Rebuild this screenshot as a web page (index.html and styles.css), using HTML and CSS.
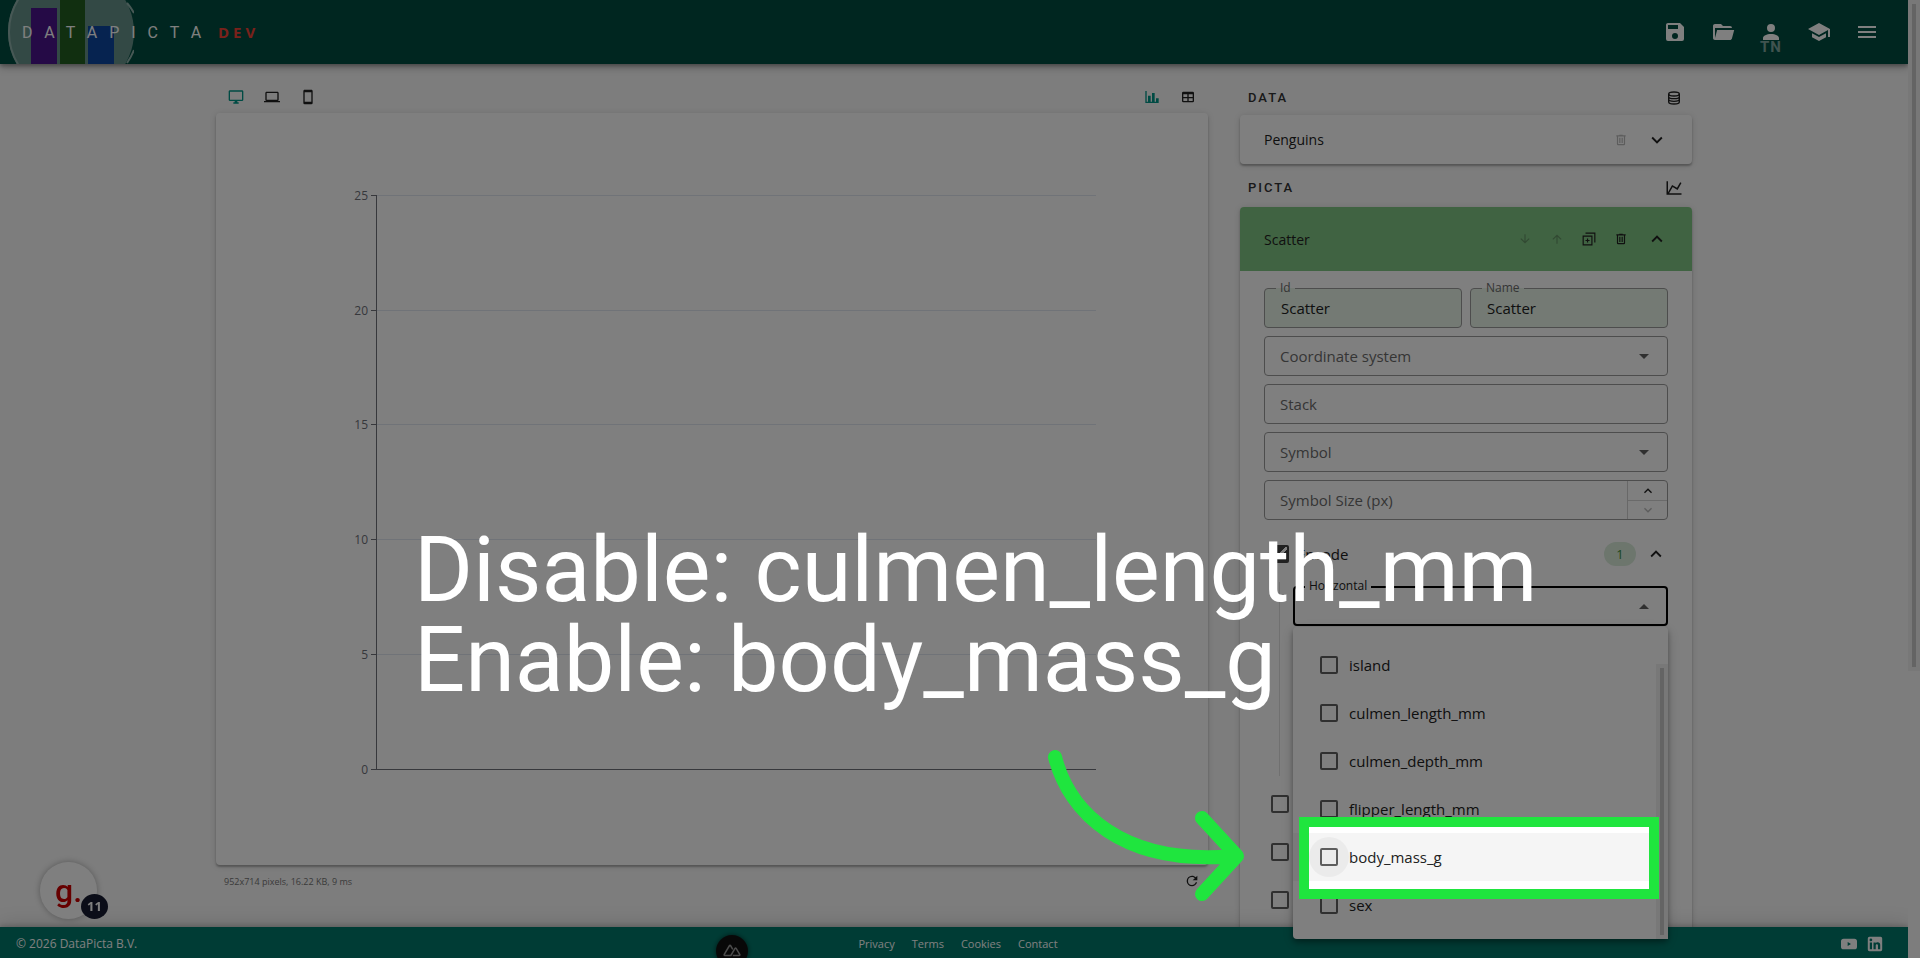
FILE: index.html
```
<!DOCTYPE html>
<html lang="en">
<head>
  <meta charset="UTF-8">
  <meta name="viewport" content="width=device-width, initial-scale=1.0">
  <title>DataPicta</title>
  <link rel="stylesheet" href="styles.css">
</head>
<body>
  <div class="window">
    <div class="app">
      <header class="topbar">
        <div class="brand">
          <svg class="brand-logo" viewBox="0 0 126 64" aria-hidden="true">
            <circle cx="63" cy="32" r="63" fill="#66938b"/>
            <path d="M126 13A63 63 0 0 0 119 3M126 50A63 63 0 0 1 119 63M14 -6A62 62 0 0 0 14 70" fill="none" stroke="#8fb0aa" stroke-width="2"/>
            <rect x="23" y="8" width="26" height="56" fill="#4a148c"/>
            <rect x="52" y="0" width="25" height="64" fill="#235e20"/>
            <rect x="80" y="26" width="26" height="38" fill="#0d47a1"/>
          </svg>
          <span class="brand-name">DATAPICTA</span>
          <span class="brand-env">DEV</span>
        </div>
        <nav class="topbar-actions">
          <button class="nav-btn" aria-label="Save"><svg viewBox="0 0 24 24"><path d="M15,9H5V5H15M12,19A3,3 0 0,1 9,16A3,3 0 0,1 12,13A3,3 0 0,1 15,16A3,3 0 0,1 12,19M17,3H5C3.89,3 3,3.9 3,5V19A2,2 0 0,0 5,21H19A2,2 0 0,0 21,19V7L17,3Z"/></svg></button>
          <button class="nav-btn" aria-label="Open"><svg viewBox="0 0 24 24"><path d="M19,20H4C2.89,20 2,19.1 2,18V6C2,4.89 2.89,4 4,4H10L12,6H19A2,2 0 0,1 21,8H21L4,8V18L6.14,10H23.21L20.93,18.5C20.7,19.37 19.92,20 19,20Z"/></svg></button>
          <button class="nav-btn" aria-label="Account"><svg viewBox="0 0 24 24"><path d="M12,4A4,4 0 0,1 16,8A4,4 0 0,1 12,12A4,4 0 0,1 8,8A4,4 0 0,1 12,4M12,14C16.42,14 20,15.79 20,18V20H4V18C4,15.79 7.58,14 12,14Z"/></svg><span class="initials">TN</span></button>
          <button class="nav-btn" aria-label="Tutorials"><svg viewBox="0 0 24 24"><path d="M12,3L1,9L12,15L21,10.09V17H23V9M5,13.18V17.18L12,21L19,17.18V13.18L12,17L5,13.18Z"/></svg></button>
          <button class="nav-btn" aria-label="Menu"><svg viewBox="0 0 24 24"><path d="M3,6H21V8H3V6M3,11H21V13H3V11M3,16H21V18H3V16Z"/></svg></button>
        </nav>
      </header>

      <main class="workspace">
        <section class="preview">
          <div class="toolbar">
            <div class="tool-group">
              <button class="tool active" aria-label="Desktop"><svg viewBox="0 0 24 24"><path d="M21,16H3V4H21M21,2H3C1.89,2 1,2.89 1,4V16A2,2 0 0,0 3,18H10V20H8V22H16V20H14V18H21A2,2 0 0,0 23,16V4C23,2.89 22.1,2 21,2Z"/></svg></button>
              <button class="tool" aria-label="Laptop"><svg viewBox="0 0 24 24"><path d="M4,6H20V16H4M20,18A2,2 0 0,0 22,16V6C22,4.89 21.1,4 20,4H4C2.89,4 2,4.89 2,6V16A2,2 0 0,0 4,18H0V20H24V18H20Z"/></svg></button>
              <button class="tool" aria-label="Phone"><svg viewBox="0 0 24 24"><path d="M17,19H7V5H17M17,1H7C5.89,1 5,1.89 5,3V21A2,2 0 0,0 7,23H17A2,2 0 0,0 19,21V3C19,1.89 18.1,1 17,1Z"/></svg></button>
            </div>
            <div class="tool-group">
              <button class="tool active" aria-label="Chart"><svg viewBox="0 0 24 24"><path d="M22,21H2V3H4V19H6V10H10V19H12V6H16V19H18V14H22V21Z"/></svg></button>
              <button class="tool" aria-label="Table"><svg viewBox="0 0 24 24"><path d="M5,4H19A2,2 0 0,1 21,6V18A2,2 0 0,1 19,20H5A2,2 0 0,1 3,18V6A2,2 0 0,1 5,4M5,8V12H11V8H5M13,8V12H19V8H13M5,14V18H11V14H5M13,14V18H19V14H13Z"/></svg></button>
            </div>
          </div>
          <div class="card chart-card">
            <svg class="chart" viewBox="0 0 952 714" role="img" aria-label="Empty scatter chart">
              <g stroke="#e0e6f1" shape-rendering="crispEdges">
                <path d="M141 63.5H860M141 178.5H860M141 292.5H860M141 407.5H860M141 522.5H860"/>
              </g>
              <g stroke="#6e7079" fill="none" shape-rendering="crispEdges">
                <path d="M140.5 63V637M135 637.5H860M135 63.5H141M135 178.5H141M135 292.5H141M135 407.5H141M135 522.5H141"/>
              </g>
              <g class="chart-labels">
                <text x="132" y="68">25</text>
                <text x="132" y="183">20</text>
                <text x="132" y="297">15</text>
                <text x="132" y="412">10</text>
                <text x="132" y="527">5</text>
                <text x="132" y="642">0</text>
              </g>
            </svg>
          </div>
          <div class="preview-status">
            <span>952x714 pixels, 16.22 KB, 9 ms</span>
            <button class="tool" aria-label="Refresh"><svg viewBox="0 0 24 24"><path d="M17.65,6.35C16.2,4.9 14.21,4 12,4A8,8 0 0,0 4,12A8,8 0 0,0 12,20C15.73,20 18.84,17.45 19.73,14H17.65C16.83,16.33 14.61,18 12,18A6,6 0 0,1 6,12A6,6 0 0,1 12,6C13.66,6 15.14,6.69 16.22,7.78L13,11H20V4L17.65,6.35Z"/></svg></button>
          </div>
        </section>

        <aside class="settings">
          <div class="section-title">
            <h2>DATA</h2>
            <button class="tool" aria-label="Add data"><svg viewBox="0 0 24 24" class="line"><ellipse cx="12" cy="6" rx="8" ry="3"/><path d="M4 6V18C4 19.7 7.6 21 12 21S20 19.7 20 18V6M4 10C4 11.7 7.6 13 12 13S20 11.7 20 10M4 14C4 15.7 7.6 17 12 17S20 15.7 20 14"/></svg></button>
          </div>
          <div class="card panel-head">
            <span class="panel-name">Penguins</span>
            <button class="small-tool" aria-label="Delete" disabled><svg viewBox="0 0 24 24"><path d="M9,3V4H4V6H5V19A2,2 0 0,0 7,21H17A2,2 0 0,0 19,19V6H20V4H15V3H9M7,6H17V19H7V6M9,8V17H11V8H9M13,8V17H15V8H13Z"/></svg></button>
            <button class="expander" aria-label="Expand"><svg viewBox="0 0 24 24"><path d="M7.41,8.58L12,13.17L16.59,8.58L18,10L12,16L6,10L7.41,8.58Z"/></svg></button>
          </div>

          <div class="section-title">
            <h2>PICTA</h2>
            <button class="tool wide" aria-label="Add picta"><svg viewBox="0 0 24 24"><path d="M16,11.78L20.24,4.45L21.97,5.45L16.74,14.5L10.23,10.75L5.46,19H22V21H2V3H4V17.54L9.5,8L16,11.78Z"/></svg></button>
          </div>
          <div class="card">
            <div class="panel-head open">
              <span class="panel-name">Scatter</span>
              <button class="small-tool" aria-label="Move down" disabled><svg viewBox="0 0 24 24"><path d="M11,4H13V16L18.5,10.5L19.92,11.92L12,19.84L4.08,11.92L5.5,10.5L11,16V4Z"/></svg></button>
              <button class="small-tool" aria-label="Move up" disabled><svg viewBox="0 0 24 24"><path d="M13,20H11V8L5.5,13.5L4.08,12.08L12,4.16L19.92,12.08L18.5,13.5L13,8V20Z"/></svg></button>
              <button class="small-tool" aria-label="Duplicate"><svg viewBox="0 0 24 24" class="line"><path d="M2 7H17V22H2ZM6 2H22V18M9.500 11V18M6 14.500H13"/></svg></button>
              <button class="small-tool" aria-label="Delete"><svg viewBox="0 0 24 24"><path d="M9,3V4H4V6H5V19A2,2 0 0,0 7,21H17A2,2 0 0,0 19,19V6H20V4H15V3H9M7,6H17V19H7V6M9,8V17H11V8H9M13,8V17H15V8H13Z"/></svg></button>
              <button class="expander" aria-label="Collapse"><svg viewBox="0 0 24 24"><path d="M7.41,15.41L12,10.83L16.59,15.41L18,14L12,8L6,14L7.41,15.41Z"/></svg></button>
            </div>
            <form class="options">
              <div class="field-row">
                <div class="field filled">
                  <label for="picta-id">Id</label>
                  <input id="picta-id" type="text" value="Scatter">
                </div>
                <div class="field filled">
                  <label for="picta-name">Name</label>
                  <input id="picta-name" type="text" value="Scatter">
                </div>
              </div>
              <div class="field">
                <label for="coord">Coordinate system</label>
                <select id="coord"></select>
                <svg class="arrow" viewBox="0 0 24 24"><path d="M7,10L12,15L17,10H7Z"/></svg>
              </div>
              <div class="field">
                <label for="stack">Stack</label>
                <input id="stack" type="text">
              </div>
              <div class="field">
                <label for="symbol">Symbol</label>
                <select id="symbol"></select>
                <svg class="arrow" viewBox="0 0 24 24"><path d="M7,10L12,15L17,10H7Z"/></svg>
              </div>
              <div class="field">
                <label for="symbol-size">Symbol Size (px)</label>
                <input id="symbol-size" type="text" inputmode="numeric">
                <div class="stepper">
                  <button type="button" aria-label="Increase"><svg viewBox="0 0 24 24"><path d="M7.41,15.41L12,10.83L16.59,15.41L18,14L12,8L6,14L7.41,15.41Z"/></svg></button>
                  <button type="button" aria-label="Decrease" disabled><svg viewBox="0 0 24 24"><path d="M7.41,8.58L12,13.17L16.59,8.58L18,10L12,16L6,10L7.41,8.58Z"/></svg></button>
                </div>
              </div>

              <div class="tree-row expanded">
                <input type="checkbox" id="encode" checked>
                <label for="encode">Encode</label>
                <span class="chip">1</span>
                <button type="button" class="expander" aria-label="Collapse"><svg viewBox="0 0 24 24"><path d="M7.41,15.41L12,10.83L16.59,15.41L18,14L12,8L6,14L7.41,15.41Z"/></svg></button>
              </div>
              <div class="tree-children">
                <div class="field focused">
                  <label for="horizontal">Horizontal</label>
                  <select id="horizontal"></select>
                  <svg class="arrow" viewBox="0 0 24 24"><path d="M7,15L12,10L17,15H7Z"/></svg>
                  <div class="menu">
                    <label class="menu-item"><input type="checkbox">island</label>
                    <label class="menu-item"><input type="checkbox">culmen_length_mm</label>
                    <label class="menu-item"><input type="checkbox">culmen_depth_mm</label>
                    <label class="menu-item"><input type="checkbox">flipper_length_mm</label>
                    <label class="menu-item hover"><input type="checkbox">body_mass_g</label>
                    <label class="menu-item"><input type="checkbox">sex</label>
                    <div class="menu-scroll"></div>
                  </div>
                </div>
              </div>
              <div class="tree-row"><input type="checkbox" aria-label="Item style"></div>
              <div class="tree-row"><input type="checkbox" aria-label="Label"></div>
              <div class="tree-row"><input type="checkbox" aria-label="Emphasis"></div>
            </form>
          </div>
        </aside>
      </main>

      <footer class="footer">
        <span>© 2026 DataPicta B.V.</span>
        <nav class="footer-links">
          <a href="#">Privacy</a>
          <a href="#">Terms</a>
          <a href="#">Cookies</a>
          <a href="#">Contact</a>
        </nav>
        <div class="social">
          <a href="#" aria-label="YouTube"><svg viewBox="0 0 24 24"><path fill-rule="evenodd" d="M4 4H20A4 4 0 0 1 24 8V16A4 4 0 0 1 20 20H4A4 4 0 0 1 0 16V8A4 4 0 0 1 4 4M10 9V15L15 12Z"/></svg></a>
          <a href="#" aria-label="LinkedIn"><svg viewBox="2 2 20 20"><path d="M19 3A2 2 0 0 1 21 5V19A2 2 0 0 1 19 21H5A2 2 0 0 1 3 19V5A2 2 0 0 1 5 3H19M18.5 18.5V13.2A3.26 3.26 0 0 0 15.24 9.94C14.39 9.94 13.4 10.46 12.92 11.24V10.13H10.13V18.5H12.92V13.57C12.92 12.8 13.54 12.17 14.31 12.17A1.4 1.4 0 0 1 15.71 13.57V18.5H18.5M6.88 8.56A1.68 1.68 0 0 0 8.56 6.88C8.56 5.95 7.81 5.19 6.88 5.19A1.69 1.69 0 0 0 5.19 6.88C5.19 7.81 5.95 8.56 6.88 8.56M8.27 18.5V10.13H5.5V18.5H8.27Z"/></svg></a>
        </div>
      </footer>
    </div>
    <div class="page-scroll"></div>
  </div>

  <!-- floating widgets -->
  <button class="guide-widget" aria-label="Guides">
    <span>g.</span>
    <span class="guide-count">11</span>
  </button>
  <button class="devtools" aria-label="Devtools">
    <svg viewBox="0 0 24 24" class="line"><path d="M13 18H21.500C22.500 18 22.700 17.200 22.300 16.500L17.500 8.500C17 7.800 16.500 7.800 16 8.500L10.500 18H2.500C1.500 18 1.300 17.200 1.700 16.500L8.500 5C9 4.300 9.700 4.300 10.200 5L13 9.800"/></svg>
  </button>

  <!-- guide step -->
  <div class="spotlight"></div>
  <svg class="guide-arrow" viewBox="0 0 204 160" aria-hidden="true">
    <path d="M11 11C25 66 78 120 190 110M158 72L193 110L158 148"/>
  </svg>
  <p class="guide-text">Disable: culmen_length_mm<br>Enable: body_mass_g</p>
</body>
</html>
```
FILE: styles.css
```
* {
  box-sizing: border-box;
}

body {
  margin: 0;
  height: 100vh;
  overflow: hidden;
  background: #fafafa;
  color: #212121;
  font-family: "Open Sans", "Noto Sans", sans-serif;
  font-size: 15px;
}

button {
  padding: 0;
  border: none;
  background: none;
  color: inherit;
  font: inherit;
  cursor: pointer;
}

button:disabled {
  opacity: 0.3;
}

a {
  color: inherit;
  text-decoration: none;
}

svg {
  display: block;
  fill: currentColor;
}

svg.line {
  fill: none;
  stroke: currentColor;
  stroke-width: 2;
}

.window {
  display: flex;
  height: 100vh;
}

.app {
  flex: 1;
  min-width: 0;
  display: flex;
  flex-direction: column;
  overflow: hidden;
}

.page-scroll {
  width: 12px;
  height: 70%;
  padding: 4px;
  background: #f1f1f1;
}

.page-scroll::before {
  content: "";
  display: block;
  height: 100%;
  background: #c8c8c8;
}

/* top bar */
.topbar {
  flex: none;
  display: flex;
  justify-content: space-between;
  height: 64px;
  padding: 0 17px 0 8px;
  background: #004d40;
  color: #fff;
  box-shadow: 0 2px 4px rgba(0, 0, 0, 0.3), 0 4px 8px rgba(0, 0, 0, 0.2);
  z-index: 1;
}

.brand {
  display: grid;
  grid-template-columns: 210px auto;
  align-items: center;
}

.brand-logo {
  grid-area: 1 / 1;
  width: 126px;
  height: 64px;
}

.brand-name {
  grid-area: 1 / 1;
  padding-left: 14px;
  font-family: Roboto, sans-serif;
  font-size: 16px;
  letter-spacing: 12px;
}

.brand-env {
  color: #f44336;
  font-size: 15px;
  font-weight: 700;
  letter-spacing: 4px;
}

.topbar-actions {
  display: flex;
  align-items: center;
}

.nav-btn {
  position: relative;
  display: grid;
  place-items: center;
  width: 48px;
  height: 48px;
}

.nav-btn svg {
  width: 24px;
  height: 24px;
}

.initials {
  position: absolute;
  top: 32px;
  left: 0;
  width: 100%;
  color: #80a69f;
  font: 700 15px/15px Roboto, sans-serif;
  letter-spacing: 1px;
  text-align: center;
}

/* workspace */
.workspace {
  flex: 1;
  min-height: 0;
  display: grid;
  grid-template-columns: minmax(0, 1fr) 452px;
  gap: 32px;
  width: 100%;
  max-width: 1500px;
  margin: 0 auto;
  padding: 17px 12px 0;
}

.card {
  border-radius: 4px;
  background: #fff;
  box-shadow: 0 2px 2px rgba(0, 0, 0, 0.25), 0 1px 6px rgba(0, 0, 0, 0.15);
}

.toolbar,
.tool-group,
.preview-status,
.section-title {
  display: flex;
  align-items: center;
}

.toolbar,
.preview-status,
.section-title {
  justify-content: space-between;
}

.toolbar {
  height: 32px;
  padding: 0 2px;
}

.tool {
  display: grid;
  place-items: center;
  width: 36px;
  height: 32px;
}

.tool svg {
  width: 16px;
  height: 16px;
}

.tool.wide svg {
  width: 18px;
  height: 18px;
}

.tool.active {
  color: #009688;
}

.chart-card {
  padding: 19px 20px;
}

.chart {
  width: 100%;
  height: auto;
}

.chart-labels {
  fill: #6e7079;
  font-size: 12px;
  text-anchor: end;
}

.preview-status {
  padding-left: 8px;
  color: #757575;
  font-size: 9px;
}

.preview-status .tool {
  width: 32px;
  color: #212121;
}

/* settings column */
.section-title {
  height: 34px;
  padding-left: 8px;
}

.section-title h2 {
  margin: 0;
  color: #333;
  font: 500 13px/16px Roboto, sans-serif;
  letter-spacing: 2px;
}

.card + .section-title {
  height: 43px;
  padding-top: 4px;
}

.panel-head {
  display: flex;
  align-items: center;
  height: 49px;
  padding: 0 19px 0 24px;
}

.panel-head.open {
  height: 64px;
  border-radius: 4px 4px 0 0;
  background: #81c784;
}

.panel-name {
  flex: 1;
  font-size: 14px;
}

.small-tool {
  display: grid;
  place-items: center;
  width: 32px;
  height: 32px;
}

.small-tool svg {
  width: 14px;
  height: 14px;
}

.expander {
  display: grid;
  place-items: center;
  width: 32px;
  height: 32px;
}

.panel-head .expander {
  margin-left: 4px;
}

.expander svg {
  width: 22px;
  height: 22px;
}

.options {
  display: flex;
  flex-direction: column;
  gap: 8px;
  padding: 17px 24px;
}

.field-row {
  display: flex;
  gap: 8px;
}

.field-row .field {
  flex: 1;
}

/* label and control share a single grid cell */
.field {
  position: relative;
  display: grid;
  align-items: center;
  height: 40px;
}

.field > label,
.field > input,
.field > select {
  grid-area: 1 / 1;
}

.field > label {
  z-index: 1;
  padding-left: 16px;
  color: #6b6b6b;
  pointer-events: none;
}

.field > input,
.field > select {
  width: 100%;
  height: 40px;
  padding: 0 16px;
  border: 1px solid #9a9a9a;
  border-radius: 4px;
  background: transparent;
  color: #212121;
  font: inherit;
  outline: none;
  appearance: none;
}

.field.filled > input {
  background: #e8f5e9;
}

.field.filled > label,
.field.focused > label {
  position: absolute;
  top: -8px;
  left: 12px;
  padding: 0 4px;
  background: linear-gradient(#fff 50%, #e8f5e9 50%);
  font-size: 12px;
  line-height: 16px;
}

.field.focused > label {
  background: #fff;
  color: #212121;
}

.field.focused > select {
  border: 2px solid #000;
}

.arrow {
  grid-area: 1 / 1;
  justify-self: end;
  width: 24px;
  height: 24px;
  margin-right: 12px;
  color: #616161;
  pointer-events: none;
}

.stepper {
  grid-area: 1 / 1;
  justify-self: end;
  display: grid;
  grid-template-rows: 1fr 1fr;
  width: 40px;
  height: 38px;
  margin-right: 1px;
  border-left: 1px solid #d0d0d0;
  z-index: 1;
}

.stepper button {
  display: grid;
  place-items: center;
}

.stepper button + button {
  border-top: 1px solid #777;
}

.stepper svg {
  width: 16px;
  height: 16px;
}

.tree-row {
  display: flex;
  align-items: center;
  gap: 8px;
  height: 40px;
  padding-left: 7px;
}

.tree-row.expanded {
  margin-top: 6px;
}

.tree-row label {
  flex: 1;
}

.tree-row .expander {
  margin: 0 -4px;
}

.chip {
  width: 32px;
  height: 24px;
  border-radius: 12px;
  background: #daecdb;
  color: #388e3c;
  font-size: 13px;
  line-height: 24px;
  text-align: center;
}

.tree-children {
  height: 194px;
  margin-left: 15px;
  padding: 4px 0 0 13px;
  border-left: 1px solid #e0e0e0;
}

input[type="checkbox"] {
  flex: none;
  width: 18px;
  height: 18px;
  margin: 0;
  border: 2px solid #616161;
  border-radius: 2px;
  appearance: none;
}

input[type="checkbox"]:checked {
  border-color: #424242;
  background: linear-gradient(135deg, transparent 45%, #fff 45% 58%, transparent 58%) #424242;
}

.menu {
  position: absolute;
  top: 41px;
  left: 0;
  right: 0;
  padding: 14px 0 10px;
  border-radius: 4px;
  background: #fff;
  box-shadow: 0 3px 5px rgba(0, 0, 0, 0.3), 0 4px 14px rgba(0, 0, 0, 0.2);
  z-index: 3;
}

.menu-item {
  display: flex;
  align-items: center;
  gap: 11px;
  height: 48px;
  padding-left: 27px;
}

.menu-item.hover {
  background: #f5f5f5;
}

/* ripple behind the hovered tick box */
.menu-item.hover input {
  position: relative;
}

.menu-item.hover input::before {
  content: "";
  position: absolute;
  inset: -13px;
  border-radius: 50%;
  background: rgba(0, 0, 0, 0.04);
}

.menu-scroll {
  position: absolute;
  top: 37px;
  right: 0;
  bottom: 0;
  width: 12px;
  padding: 4px;
  background: #f1f1f1;
}

.menu-scroll::before {
  content: "";
  display: block;
  height: 100%;
  background: #c8c8c8;
}

/* footer */
.footer {
  flex: none;
  display: grid;
  grid-template-columns: 1fr auto 1fr;
  align-items: center;
  height: 31px;
  padding: 2px 25px 0 16px;
  background: #00796b;
  color: #fff;
  font-size: 12px;
  box-shadow: 0 -2px 4px rgba(0, 0, 0, 0.15), 0 -2px 20px rgba(0, 0, 0, 0.15);
  z-index: 2;
}

.footer-links {
  display: flex;
  font-size: 11px;
}

.footer-links a {
  margin-left: 17px;
}

.social {
  display: flex;
  justify-content: flex-end;
  gap: 10px;
}

.social svg {
  width: 16px;
  height: 16px;
}

/* floating widgets */
.guide-widget {
  position: fixed;
  left: 40px;
  bottom: 39px;
  width: 57px;
  height: 57px;
  border-radius: 50%;
  background: #fff;
  box-shadow: 0 0 6px rgba(0, 0, 0, 0.3);
  color: #c00;
  font: 500 32px/48px Roboto, sans-serif;
  z-index: 4;
}

.guide-count {
  position: absolute;
  right: -11px;
  bottom: 0;
  width: 27px;
  height: 25px;
  border-radius: 50%;
  background: #161a30;
  color: #fff;
  font: 700 13px/25px "Open Sans", sans-serif;
}

.devtools {
  position: fixed;
  left: 716px;
  bottom: -9px;
  display: grid;
  place-items: center;
  width: 32px;
  height: 32px;
  border-radius: 50%;
  background: #111;
  box-shadow: 0 0 5px rgba(0, 0, 0, 0.6);
  color: #999;
  z-index: 4;
}

.devtools svg {
  width: 18px;
  height: 18px;
}

/* guide step: everything outside the spotlight is dimmed */
.spotlight {
  position: fixed;
  top: 817px;
  left: 1299px;
  width: 360px;
  height: 82px;
  border: 10px solid #1fe53e;
  box-shadow: 0 0 0 2000px rgba(0, 0, 0, 0.5);
  z-index: 10;
}

.guide-arrow {
  position: fixed;
  top: 746px;
  left: 1044px;
  width: 204px;
  height: 160px;
  fill: none;
  stroke: #1fe53e;
  stroke-width: 14;
  stroke-linecap: round;
  stroke-linejoin: round;
  z-index: 11;
}

.guide-text {
  position: fixed;
  top: 526px;
  left: 414px;
  margin: 0;
  color: #fff;
  font: 400 90px/90px Roboto, sans-serif;
  white-space: nowrap;
  z-index: 11;
}
```
